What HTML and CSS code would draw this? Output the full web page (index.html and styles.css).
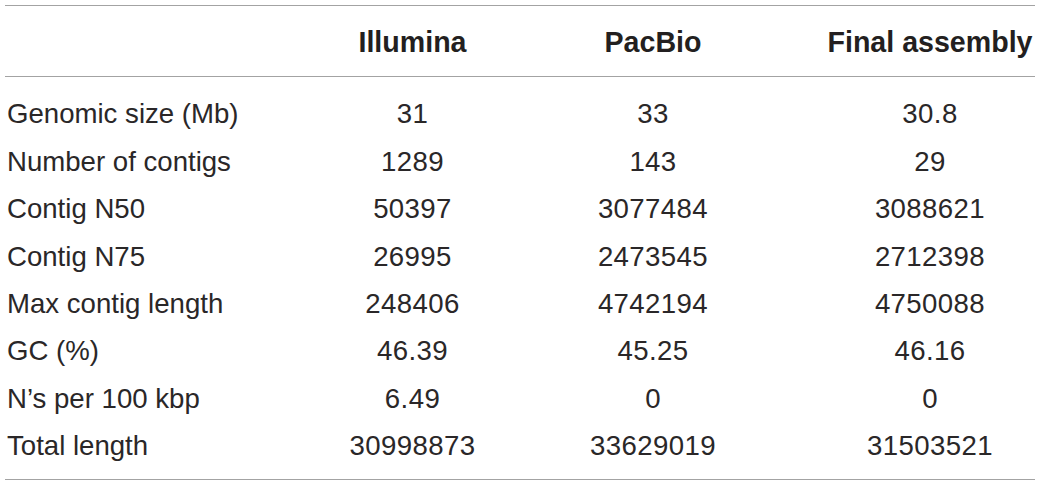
FILE: index.html
```html
<!DOCTYPE html>
<html>
<head>
<meta charset="utf-8">
<link rel="stylesheet" href="styles.css">
</head>
<body>
<div class="table">
  <div class="head">
    <div class="cell label"></div>
    <div class="cell">Illumina</div>
    <div class="cell">PacBio</div>
    <div class="cell last">Final assembly</div>
  </div>
  <div class="body">
    <div class="row"><div class="cell label">Genomic size (Mb)</div><div class="cell num">31</div><div class="cell num">33</div><div class="cell num last">30.8</div></div>
    <div class="row"><div class="cell label">Number of contigs</div><div class="cell num">1289</div><div class="cell num">143</div><div class="cell num last">29</div></div>
    <div class="row"><div class="cell label">Contig N50</div><div class="cell num">50397</div><div class="cell num">3077484</div><div class="cell num last">3088621</div></div>
    <div class="row"><div class="cell label">Contig N75</div><div class="cell num">26995</div><div class="cell num">2473545</div><div class="cell num last">2712398</div></div>
    <div class="row"><div class="cell label">Max contig length</div><div class="cell num">248406</div><div class="cell num">4742194</div><div class="cell num last">4750088</div></div>
    <div class="row"><div class="cell label">GC (%)</div><div class="cell num">46.39</div><div class="cell num">45.25</div><div class="cell num last">46.16</div></div>
    <div class="row"><div class="cell label">N’s per 100 kbp</div><div class="cell num">6.49</div><div class="cell num">0</div><div class="cell num last">0</div></div>
    <div class="row"><div class="cell label">Total length</div><div class="cell num">30998873</div><div class="cell num">33629019</div><div class="cell num last">31503521</div></div>
  </div>
</div>
</body>
</html>
```
FILE: styles.css
```css
html, body {
  margin: 0;
  padding: 0;
  background: #ffffff;
}
body {
  font-family: "Liberation Sans", Arial, Helvetica, sans-serif;
  color: #2a2728;
  font-size: 27.6px;
  line-height: 47.4px;
}
.table {
  margin: 5px 0 0 5px;
  width: 1030px;
  border-top: 1.5px solid #a3a3a3;
  border-bottom: 1.5px solid #a3a3a3;
}
.head {
  display: grid;
  grid-template-columns: 325px 165px 316px 1fr;
  padding: 13px 0 10px;
  border-bottom: 1.5px solid #a3a3a3;
  font-weight: bold;
  font-size: 28.6px;
  color: #231f20;
}
.body {
  padding: 13px 0 9px;
}
.row {
  display: grid;
  grid-template-columns: 325px 165px 316px 1fr;
}
.cell {
  text-align: center;
  white-space: nowrap;
}
.cell.label {
  text-align: left;
  padding-left: 2px;
}
.cell.num {
  letter-spacing: 0.4px;
}
.cell.last {
  padding-left: 14px;
}
```
